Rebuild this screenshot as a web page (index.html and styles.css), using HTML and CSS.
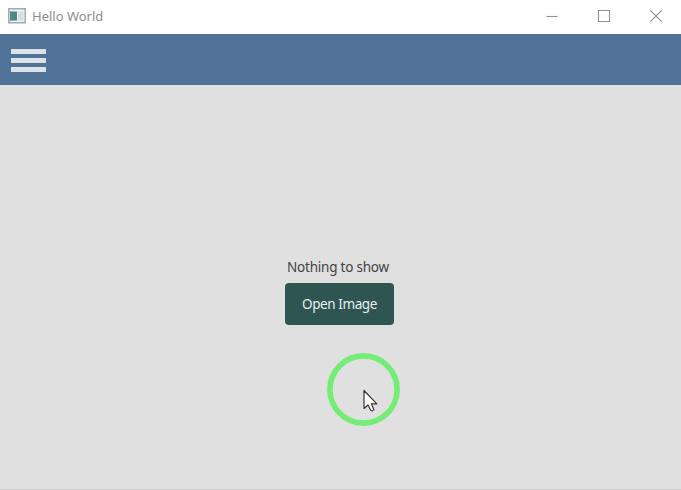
FILE: index.html
```html
<!DOCTYPE html>
<html lang="en">
<head>
<meta charset="utf-8">
<title>Hello World</title>
<link rel="stylesheet" href="styles.css">
</head>
<body>
<div class="window">
  <header class="titlebar">
    <svg class="app-icon" width="18" height="16" viewBox="0 0 18 16">
      <rect x=".75" y=".75" width="16.5" height="14" fill="#eef1f3" stroke="#a3a9ac" stroke-width="1.5"/>
      <rect x="2" y="3.5" width="7" height="9" fill="#438b83"/>
      <rect x="2" y="3.5" width="2" height="9" fill="#66839a"/>
      <rect x="10.5" y="3.5" width="5" height="9" fill="#d6dce1"/>
    </svg>
    <span class="title">Hello World</span>
    <div class="controls">
      <svg width="12" height="12" viewBox="0 0 12 12"><path d="M.5 6.5h11"/></svg>
      <svg width="12" height="12" viewBox="0 0 12 12"><path d="M.5.5h11v11H.5z"/></svg>
      <svg width="12" height="12" viewBox="0 0 12 12"><path d="M.3.3l11.4 11.4M11.7.3L.3 11.7"/></svg>
    </div>
  </header>
  <nav class="toolbar">
    <button class="menu" aria-label="Menu"><i></i><i></i><i></i></button>
  </nav>
  <main class="content">
    <p class="message">Nothing to show</p>
    <button class="open">Open Image</button>
  </main>
  <div class="pointer">
    <svg width="73" height="73" viewBox="0 0 73 73">
      <circle cx="36.5" cy="36.5" r="33.6" fill="none" stroke="#73ed76" stroke-width="5.6"/>
      <path d="M37 37.5V55.5L41 52L43.8 57.3Q45.3 58.8 46.9 56.5L44.3 50.8H49.8Z" fill="#fff" stroke="#343436" stroke-width="1.2" stroke-linejoin="round"/>
    </svg>
  </div>
</div>
</body>
</html>
```
FILE: styles.css
```css
* { box-sizing: border-box; }
body {
  margin: 0;
  font: 14px "Noto Sans", "Open Sans", sans-serif;
}
svg { display: block; flex: none; }
.window {
  position: relative;
  display: flex;
  flex-direction: column;
  width: 681px;
  height: 490px;
  background: #e0e0e0;
  border-bottom: 1px solid #cbccd0;
  overflow: hidden;
}
.titlebar {
  display: flex;
  align-items: center;
  height: 34px;
  padding: 0 19px 2px 8px;
  background: #fefefe;
}
.title {
  margin-left: 6px;
  font-size: 13px;
  line-height: 20px;
  color: #8d8d8d;
}
.controls {
  display: flex;
  gap: 40px;
  margin-left: auto;
}
.controls path { fill: none; stroke: #929292; stroke-width: 1.1; }
.toolbar {
  display: flex;
  align-items: flex-start;
  height: 51px;
  padding: 15px 11px;
  background: #517397;
}
.menu {
  display: flex;
  flex-direction: column;
  gap: 4px;
  width: 35px;
  padding: 0;
  border: 0;
  background: none;
}
.menu i { height: 5px; background: #dce2ea; }
.content {
  display: flex;
  flex: 1;
  flex-direction: column;
  align-items: center;
  padding: 172px 2px 0 0;
}
.message {
  margin: 0 3px 0 0;
  font-size: 13.5px;
  line-height: 20px;
  letter-spacing: -0.22px;
  color: #444;
}
.open {
  width: 109px;
  height: 42px;
  margin-top: 5.5px;
  padding: 0;
  border: 0;
  border-radius: 4px;
  background: #2f5553;
  font: inherit;
  font-size: 13.5px;
  letter-spacing: -0.4px;
  color: #e5f0ef;
}
.pointer {
  position: absolute;
  left: 327px;
  top: 353px;
  pointer-events: none;
}
```
